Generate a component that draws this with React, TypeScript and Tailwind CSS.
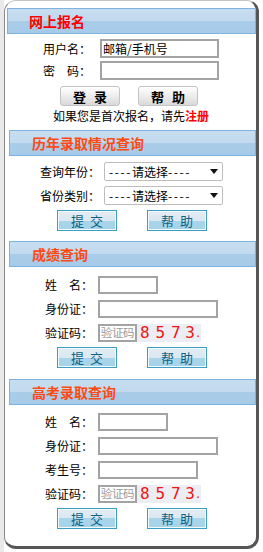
import React from 'react';

function Header({ title, red, first }: { title: string; red?: boolean; first?: boolean }) {
  return (
    <div
      className={`${first ? 'ml-[2px] pl-[21px]' : 'ml-[4px] pl-[22px]'} h-[26px] flex items-center border border-[#7fb2e0] bg-[linear-gradient(to_bottom,#c7ddf0_0%,#c2daee_50%,#a9cde9_50%,#a6cbe8_100%)]`}
    >
      <span className={`text-[14px] font-bold leading-none ${red ? 'text-[#ff0000]' : 'text-[#ff4a14]'}`}>{title}</span>
    </div>
  );
}

function BlueButtons() {
  return (
    <div className="flex pl-[52px] gap-[30px]">
      {['提', '帮'].map((a, i) => (
        <div
          key={a}
          className="w-[60px] h-[21px] flex items-center justify-center gap-[6px] border border-[#3c9ec4] shadow-[inset_0_0_0_1px_#f4f9fc] bg-[linear-gradient(to_bottom,#e2ecf3_0%,#dbe8f1_50%,#a9d5ea_50%,#a6d3e9_100%)] text-[13px] leading-none text-[#0e6286]"
        >
          <span>{a}</span>
          <span>{i === 0 ? '交' : '助'}</span>
        </div>
      ))}
    </div>
  );
}

function Captcha() {
  return (
    <div className="flex items-center">
      <div className="w-[39px] h-[18px] border-2 border-[#a3a3a3] flex items-center justify-center text-[11.5px] leading-none text-[#9a9a9a] whitespace-nowrap overflow-hidden tracking-[-0.3px]">
        验证码
      </div>
      <div className="w-[64px] h-[18px] bg-[#eceef3] flex items-center pl-[3px] font-['DejaVu_Sans_Mono',monospace] text-[16px] leading-none text-[#ee1515]">
        <span className="w-[16px]">8</span>
        <span className="w-[16px]">5</span>
        <span className="w-[15px]">7</span>
        <span>3</span>
        <span className="text-[10px] self-end mb-[3px]">.</span>
      </div>
    </div>
  );
}

function Select() {
  return (
    <div className="w-[119px] h-[19px] border border-[#bdbdbd] rounded-[2px] bg-white flex items-center pl-[4px] pr-[4px] justify-between text-[12px] leading-none whitespace-nowrap">
      <span>
        <span className="tracking-[1.6px]">----</span>请选择<span className="tracking-[1.6px]">----</span>
      </span>
      <svg width="8" height="5" viewBox="0 0 8 5">
        <path d="M0 0H8L4 5Z" fill="#111" />
      </svg>
    </div>
  );
}

function Input({ w }: { w: string }) {
  return <div className={`${w} h-[18px] border-2 border-[#a3a3a3] bg-white`} />;
}

export default function App() {
  return (
    <div className="w-[263px] h-[552px] bg-white flex font-['Noto_Sans_CJK_SC',sans-serif] text-black">
      <div className="w-[4px] h-full bg-[#e9e9e9]" />
      <div className="w-[255px] h-[549px] flex flex-col rounded-[12px] border-t border-t-[#c4c4c4] border-l border-l-[#8a8a8a] border-r-[3px] border-r-[#565656] border-b-[3px] border-b-[#565656] bg-white">
        {/* 网上报名 */}
        <div className="mt-[7px]">
          <Header title="网上报名" red first />
        </div>
        <div className="mt-[5px] flex items-center pl-[38px]">
          <span className="w-[57px] text-[12px]">用户名：</span>
          <div className="w-[119px] h-[19px] border-2 border-[#a3a3a3] flex items-center pl-[1px] text-[12px] leading-none">邮箱/手机号</div>
        </div>
        <div className="mt-[3px] flex items-center pl-[38px]">
          <span className="w-[57px] text-[12px]">密　码：</span>
          <div className="w-[119px] h-[19px] border-2 border-[#a3a3a3]" />
        </div>
        <div className="mt-[6px] flex pl-[55px] gap-[18px]">
          {[['登', '录'], ['帮', '助']].map(([a, b]) => (
            <div
              key={a}
              className="w-[60px] h-[20px] rounded-[3px] border border-[#c4c4c4] bg-[linear-gradient(to_bottom,#ffffff,#e9e9e9_60%,#d9d9d9)] flex items-center justify-center gap-[8px] text-[13px] font-bold leading-none"
            >
              <span>{a}</span>
              <span>{b}</span>
            </div>
          ))}
        </div>
        <div className="mt-[2px] h-[16px] pl-[48px] text-[12px] leading-[16px]">
          如果您是首次报名，请先<span className="text-[#ff0000] font-bold">注册</span>
        </div>

        {/* 历年录取情况查询 */}
        <div className="mt-[6px]">
          <Header title="历年录取情况查询" />
        </div>
        <div className="mt-[6px] flex items-center pl-[35px]">
          <span className="w-[64px] text-[12px]">查询年份：</span>
          <Select />
        </div>
        <div className="mt-[5px] flex items-center pl-[35px]">
          <span className="w-[64px] text-[12px]">省份类别：</span>
          <Select />
        </div>
        <div className="mt-[5px]">
          <BlueButtons />
        </div>

        {/* 成绩查询 */}
        <div className="mt-[10px]">
          <Header title="成绩查询" />
        </div>
        <div className="mt-[9px] flex items-center pl-[40px]">
          <span className="w-[53px] text-[12px]">姓　名：</span>
          <Input w="w-[60px]" />
        </div>
        <div className="mt-[6px] flex items-center pl-[40px]">
          <span className="w-[53px] text-[12px]">身份证：</span>
          <Input w="w-[120px]" />
        </div>
        <div className="mt-[6px] flex items-center pl-[40px]">
          <span className="w-[53px] text-[12px]">验证码：</span>
          <Captcha />
        </div>
        <div className="mt-[5px]">
          <BlueButtons />
        </div>

        {/* 高考录取查询 */}
        <div className="mt-[11px]">
          <Header title="高考录取查询" />
        </div>
        <div className="mt-[8px] flex items-center pl-[40px]">
          <span className="w-[53px] text-[12px]">姓　名：</span>
          <Input w="w-[70px]" />
        </div>
        <div className="mt-[6px] flex items-center pl-[40px]">
          <span className="w-[53px] text-[12px]">身份证：</span>
          <Input w="w-[120px]" />
        </div>
        <div className="mt-[6px] flex items-center pl-[40px]">
          <span className="w-[53px] text-[12px]">考生号：</span>
          <Input w="w-[100px]" />
        </div>
        <div className="mt-[6px] flex items-center pl-[40px]">
          <span className="w-[53px] text-[12px]">验证码：</span>
          <Captcha />
        </div>
        <div className="mt-[5px]">
          <BlueButtons />
        </div>
      </div>
    </div>
  );
}
